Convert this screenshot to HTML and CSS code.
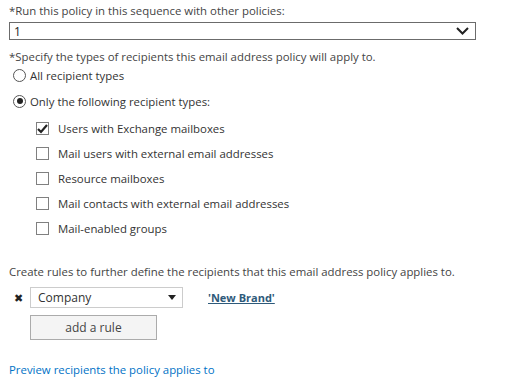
FILE: index.html
```html
<!DOCTYPE html>
<html>
<head>
<meta charset="utf-8">
<link rel="stylesheet" href="styles.css">
</head>
<body>
<div class="page">
  <div class="field">
    <div class="label">*Run this policy in this sequence with other policies:</div>
    <div class="select">
      <span>1</span>
      <svg class="chev" width="13" height="8" viewBox="0 0 13 8"><path d="M1 1 L6.5 6.5 L12 1" fill="none" stroke="#222" stroke-width="2"/></svg>
    </div>
  </div>

  <div class="field types">
    <div class="label">*Specify the types of recipients this email address policy will apply to.</div>
    <div class="radio"><span class="rb"></span><span>All recipient types</span></div>
    <div class="radio"><span class="rb on"></span><span>Only the following recipient types:</span></div>
    <div class="checks">
      <div class="check"><span class="cb"><svg width="11" height="10" viewBox="0 0 11 10"><path d="M1 5 L4 8 L10 1" fill="none" stroke="#222" stroke-width="2.2"/></svg></span><span>Users with Exchange mailboxes</span></div>
      <div class="check"><span class="cb"></span><span>Mail users with external email addresses</span></div>
      <div class="check"><span class="cb"></span><span>Resource mailboxes</span></div>
      <div class="check"><span class="cb"></span><span>Mail contacts with external email addresses</span></div>
      <div class="check"><span class="cb"></span><span>Mail-enabled groups</span></div>
    </div>
  </div>

  <div class="rules">
    <div class="label">Create rules to further define the recipients that this email address policy applies to.</div>
    <div class="rule">
      <span class="x">✖</span>
      <div class="dd"><span>Company</span><svg width="8" height="5" viewBox="0 0 8 5"><path d="M0 0 H8 L4 5 Z" fill="#222"/></svg></div>
      <a class="val">'New Brand'</a>
    </div>
    <div class="btnrow"><button class="btn">add a rule</button></div>
  </div>

  <a class="preview">Preview recipients the policy applies to</a>
</div>
</body>
</html>
```
FILE: styles.css
```css
html, body { margin: 0; padding: 0; background: #fff; }
body { font-family: "Open Sans", "Noto Sans", sans-serif; font-size: 11.4px; color: #333; }
.page { padding: 3px 9px 0 9px; width: 467px; }
.label { color: #444; line-height: 15px; }
.select {
  margin-top: 4px; height: 16px; border: 1px solid #6b6b6b; display: flex; align-items: center;
  justify-content: space-between; padding: 0 6px 0 4px; color: #222; font-size: 12px;
}
.types { margin-top: 9px; }
.radio { display: flex; align-items: center; gap: 4px; margin-left: 4px; height: 18px; margin-top: 2px; color: #333; }
.radio + .radio { margin-top: 8px; }
.rb { width: 13px; height: 13px; border: 1px solid #555; border-radius: 50%; box-sizing: border-box; position: relative; }
.rb.on::after { content: ""; position: absolute; left: 2.5px; top: 2.5px; width: 6px; height: 6px; border-radius: 50%; background: #222; }
.checks { margin-left: 27px; margin-top: 10px; }
.check { display: flex; align-items: center; gap: 9px; height: 17px; margin-bottom: 8px; }
.cb { width: 13px; height: 13px; border: 1px solid #808080; box-sizing: border-box; display: flex; align-items: center; justify-content: center; }
.rules { margin-top: 27px; }
.rule { display: flex; align-items: center; margin-top: 8px; }
.x { width: 21px; font-size: 11px; color: #222; padding-left: 5px; box-sizing: border-box; }
.dd {
  width: 153px; height: 21px; box-sizing: border-box; border: 1px solid #ccc; display: flex; align-items: center;
  justify-content: space-between; padding: 0 6px 0 7px; font-size: 12px; color: #333;
}
.val { margin-left: 25px; color: #2e5a7a; font-weight: bold; text-decoration: underline; font-size: 11px; }
.btnrow { margin-left: 21px; margin-top: 7px; }
.btn {
  width: 127px; height: 25px; border: 1px solid #ababab; background: #f4f4f4; font-family: inherit; font-size: 12px; color: #444; padding: 0; display: block;
}
.preview { display: block; margin-top: 22px; line-height: 15px; color: #0072c6; font-size: 11.4px; }
```
